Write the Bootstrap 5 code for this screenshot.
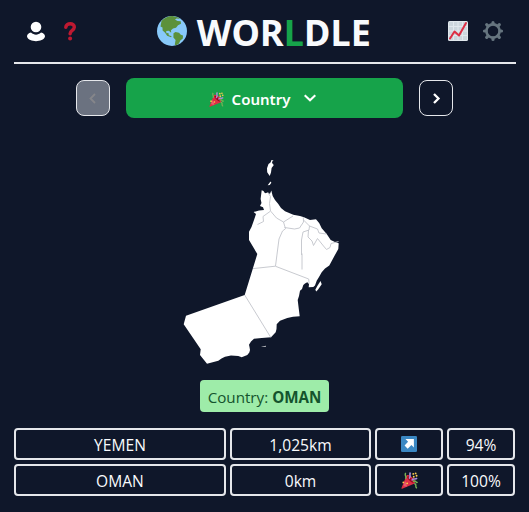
<!DOCTYPE html>
<html lang="en">
<head>
<meta charset="utf-8">
<meta name="viewport" content="width=device-width, initial-scale=1">
<title>Worldle</title>
<link href="https://cdn.jsdelivr.net/npm/bootstrap@5.3.0/dist/css/bootstrap.min.css" rel="stylesheet">
<style>
  body { background: #0f172a; color: #f8fafc; font-family: "Open Sans", "Noto Sans", sans-serif; font-size: 16px; overflow: hidden; }
  svg { display: block; flex: none; }
  .game { width: 501px; margin-left: 14px; }
  .topbar { width: 502px; height: 64px; border-bottom: 2px solid #e5e7eb; }
  .brand { gap: 9px; padding-left: 1px; }
  .wordmark { font-family: "Noto Sans", sans-serif; font-size: 36px; line-height: 40px; letter-spacing: .15px; padding-top: 4px; }
  .wordmark .accent { color: #16a34a; }
  .tools { gap: 14px; }
  .modes { margin-top: 14px; }
  .step { width: 34px; height: 36px; border: 1px solid #e5e7eb; border-radius: 8px; background: transparent; color: #fff; }
  .step:disabled { background: #6b7280; color: #85868a; }
  .picker { width: 277px; height: 40px; border-radius: 8px; background: #16a34a; color: #fff; font-family: "Noto Sans", sans-serif; font-weight: 600; font-size: 15px; padding: 0 4px 0 0; }
  .picker span { padding-top: 3px; margin-left: 8px; margin-right: 14px; }
  .picker .flag { margin-top: 3px; }
  .map { height: 262px; }
  .answer { width: 129px; height: 32px; border-radius: 4px; background: #9eeca9; color: #14532d; font-size: 15.2px; white-space: nowrap; padding-top: 3px; }
  .guesses { grid-template-columns: 212px 141px 68px 68px; gap: 4px; margin-top: 16px; }
  .cell { height: 32px; border: 2px solid #e5e7eb; border-radius: 4px; font-size: 15.6px; padding-top: 3px; min-width: 0; }
</style>
</head>
<body>
<svg width="0" height="0" class="position-absolute">
  <symbol id="party" viewBox="0 0 36 36">
    <path fill="#dd2e44" d="M11.600 7.600 1 34c-.5 1 .5 2 1.500 1.600L29 24.500c2-3-1-9-5-13S14 5 11.600 7.600Z"/>
    <path fill="#ea596e" d="M12 11 5 29c2 2 5 2 8 1l-4-11Z"/>
    <ellipse cx="20" cy="16" rx="3" ry="9" transform="rotate(-45 20 16)" fill="#a0041e"/>
    <path fill="none" stroke="#77b255" stroke-width="3" d="M9 14c5-4-3-6 1-12M25 20c8-5 6 6 10 1M28 25c7 0 0 8 6 9"/>
    <path fill="none" stroke="#aa8dd8" stroke-width="3.500" d="M17 14c6-5-1-7 3-13M23 18c2-7 6 0 11-5"/>
    <g fill="#ffcc4d"><circle cx="5" cy="22" r="2"/><circle cx="26" cy="4" r="2"/><circle cx="31" cy="3" r="2"/><circle cx="33" cy="8" r="2"/><circle cx="27" cy="10" r="2"/><circle cx="13" cy="24" r="2"/></g>
  </symbol>
</svg>

<main class="game">
  <header class="topbar d-flex align-items-center justify-content-between">
    <div class="d-flex align-items-center ps-2">
      <svg class="ms-1" width="20" height="24" viewBox="0 0 20 24"><g fill="#fff"><circle cx="10" cy="8" r="5.300"/><path d="M5 13.600c3 2.700 7 2.700 10 0 2.500.4 4 2 4 4C18 21 14 22.200 10 22.200S2 21 1 17.600c0-2 1.500-3.600 4-4Z"/></g></svg>
      <svg class="ms-3" width="16" height="20" viewBox="0 0 16 20"><path d="M3.800 6.300c.2-4.800 8.700-4.800 8.500 0-.2 3.200-4.200 3-4.200 6.500" fill="none" stroke="#be1931" stroke-width="3.500" stroke-linecap="round"/><circle cx="8.100" cy="17.500" r="2" fill="#be1931"/></svg>
    </div>
    <div class="brand d-flex align-items-center">
      <svg width="32" height="32" viewBox="0 0 32 32">
        <circle cx="16" cy="16" r="15" fill="#88c9f9"/>
        <path fill="#5c913b" d="M5.500 6C8.500 2.800 12.500 1 16.500 1L23 2.800l.8 1-3.300-.3-1.500 1 2.500 1.500 3.200.2.300 2.500-3 1.500-2 2.500-3 .8-2 1.700.2 2.500-2.400-2-2.600.3.200 2.300 2-.2.400 2.200 2.800 1-.5 1-4-1.500-2-3-2.500-2.300L6.500 12.500l-2-1Z"/>
        <path fill="#5c913b" d="m17.500 18.200 2-1.200 3.500.8 1.800 2 2.200.8-.2 3-2.500 2-1.300 3-3.200 2-1-1 .8-4.600-2.200-2.600Z"/>
      </svg>
      <h1 class="wordmark fw-bold mb-0">WOR<span class="accent">L</span>DLE</h1>
    </div>
    <div class="tools d-flex align-items-center pe-2">
      <svg width="20" height="20" viewBox="0 0 20 20"><rect width="20" height="20" rx="1.500" fill="#e1e8ed"/><rect x="1" y="1" width="18" height="18" fill="#ccd6dd"/><path d="M1 5.500h18M1 10h18M1 14.500h18M5.500 1v18M10 1v18M14.500 1v18" stroke="#e1e8ed"/><path d="m2 17.500 4.500-7 4.500 4L18 2" fill="none" stroke="#dd2e44" stroke-width="2" stroke-linecap="round" stroke-linejoin="round"/></svg>
      <svg class="me-1" width="22" height="22" viewBox="0 0 22 22"><g fill="none" stroke="#66757f"><circle cx="11" cy="11" r="6.600" stroke-width="2.600"/><path stroke-width="3.200" stroke-linecap="round" d="M11 2.500v1.500M11 18v1.500M2.500 11H4M18 11h1.500M4.700 4.700l1.400 1.400M15.900 15.900l1.400 1.400M4.700 17.300l1.400-1.400M15.900 6.100l1.400-1.400"/></g></svg>
    </div>
  </header>

  <nav class="modes d-flex justify-content-center align-items-center gap-3">
    <button class="step d-flex align-items-center justify-content-center p-0" disabled aria-label="Previous"><svg width="10" height="14" viewBox="0 0 10 14"><path d="M7 3 2.500 7.500 7 12" fill="none" stroke="currentColor" stroke-width="1.800"/></svg></button>
    <button class="picker border-0 d-flex align-items-center justify-content-center"><svg class="flag" width="15" height="15"><use href="#party"/></svg><span>Country</span><svg width="12" height="12" viewBox="0 0 12 12"><path d="m.7 3.200 5.300 5 5.300-5" fill="none" stroke="#fff" stroke-width="2.100"/></svg></button>
    <button class="step d-flex align-items-center justify-content-center p-0" aria-label="Next"><svg width="10" height="14" viewBox="0 0 10 14"><path d="M3 3 7.500 7.500 3 12" fill="none" stroke="currentColor" stroke-width="2.300"/></svg></button>
  </nav>

  <section class="map">
    <svg width="501" height="262" viewBox="14 118 501 262">
      <g fill="#fff">
        <path d="M261.700 190.300 263.500 191 265 193.300 267 192.700 270 193.700 271.300 190.500 272.700 196 275 200 278.300 204 281 208 285 211.300 293.300 214.700 300 216 304 217.300 310 220 316 219.300 319.300 223.300 321.700 228.300 326.700 234 330.700 240 335 242 338.700 243.300 338.300 249 334 256.700 329.300 265.500 325 268.500 321.700 272.300 319 277 316.700 280.700 315 285.500 313.300 287 308.700 287.300 309 284 307.300 282.300 305 283.500 303.300 285 302 289 300 290.700 299 296 297.700 300 298.700 308.300 299.700 316.300 293 316.700 287.300 318 280 320.700 276.700 324.300 276.500 329 275.700 332.300 271 337.300 261.700 338 254 338.700 251 341.500 249 344.700 249.500 347 250 350 249.300 352.500 247.300 355 241.700 357.300 238.300 356 231 355.600 225 356.700 221.500 358.500 218.300 360.700 207 363.700 200 355 200.700 349.300 183.700 324.300 186 315.700 244.700 295 257.300 254 249 240 249 231.700 251.500 227 254 220 256 214 253.600 212 259 210.500 264 210 263 207.200 260 206 261.500 203 260.600 199Z"/>
        <path d="m271.500 160 2 .6-1.600 1.400.7 1.700 1.200 1.200-2.200 3.100-.6 4.500-1.300 3.500-2.500-3.700-.2-4 1.500-4.200 2-1.500Z"/>
        <path d="m270.500 181.500.9 1.200-1.700 2.200-2 .3Z"/>
        <path d="m320.500 281 1.200 3.200-3.400 5-2 2.200-1-1.600 2-3.800Z"/>
        <path d="m261 346 3 .2 1.800-.5v1h-2.400Z"/>
      </g>
      <g fill="none" stroke="#c2c4cb" stroke-width=".9">
        <path d="m244.700 295 26 42.300M253 268.600l22.300-2.400 33.400 12.800.4 4.500M275.500 266l3.500-27 3.500-8 3-2.300-2-6.700-7-4-6-7-1-7.500 1-7-3-4.500"/>
        <path d="m257.500 224.500 6-3-.5-5 7-5M283.500 222l9.500-6M284.500 227.500l10 1.500 5-1 4-6-.2-5M303.500 220l6 6 8 3 1.500 4 7.500 1"/>
        <path d="m309.500 226-.5 4-6 2-1.500 8v15M302 253.500v16M308.500 230l-.5 7 4 4 1.500 4.500 4-7 6 7.500 3 3.500 3.500-2 1-4 7.500-2"/>
      </g>
    </svg>
  </section>

  <div class="answer mx-auto d-flex align-items-center justify-content-center"><span>Country: <b>OMAN</b></span></div>

  <section class="guesses d-grid">
    <div class="cell d-flex align-items-center justify-content-center">YEMEN</div>
    <div class="cell d-flex align-items-center justify-content-center">1,025km</div>
    <div class="cell d-flex align-items-center justify-content-center pt-0"><svg width="16" height="16" viewBox="0 0 36 36"><rect width="36" height="36" rx="3" fill="#3b88c3"/><path fill="#fff" d="M10 7h19v19l-5.500-5.500-8.500 8-7-7 8-8.500Z"/></svg></div>
    <div class="cell d-flex align-items-center justify-content-center">94%</div>
    <div class="cell d-flex align-items-center justify-content-center">OMAN</div>
    <div class="cell d-flex align-items-center justify-content-center">0km</div>
    <div class="cell d-flex align-items-center justify-content-center pt-0"><svg width="17" height="17"><use href="#party"/></svg></div>
    <div class="cell d-flex align-items-center justify-content-center">100%</div>
  </section>
</main>
<script src="https://cdn.jsdelivr.net/npm/bootstrap@5.3.0/dist/js/bootstrap.bundle.min.js"></script>
</body>
</html>
